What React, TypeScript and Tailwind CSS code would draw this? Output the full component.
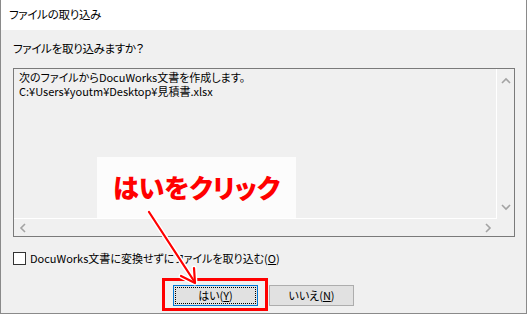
import React from 'react';

const ui = "font-['Noto_Sans_CJK_JP','Noto_Sans',sans-serif] [font-feature-settings:'palt']";

const Chevron = ({ dir }: { dir: 'up' | 'down' | 'left' | 'right' }) => {
  const paths: Record<string, string> = {
    up: 'M1 6 L5 2 L9 6',
    down: 'M1 2 L5 6 L9 2',
    left: 'M6 1 L2 5 L6 9',
    right: 'M2 1 L6 5 L2 9',
  };
  const vertical = dir === 'up' || dir === 'down';
  return (
    <svg width={vertical ? 10 : 8} height={vertical ? 8 : 10} viewBox={vertical ? '0 0 10 8' : '0 0 8 10'}>
      <path d={paths[dir]} fill="none" stroke="#a3a3a3" strokeWidth="1.6" />
    </svg>
  );
};

export default function App() {
  return (
    <div className={`relative w-[527px] h-[317px] overflow-hidden bg-white text-[11px] text-black ${ui}`}>
      {/* Window */}
      <div className="flex flex-col h-[314px] border-l border-r border-b border-[#8a8a8a]">
        {/* Title bar */}
        <div className="h-[30px] shrink-0 bg-white flex items-center pl-[8px] text-[11.5px] tracking-[-0.3px]">
          ファイルの取り込み
        </div>

        {/* Body */}
        <div className="flex-1 bg-[#f0f0f0] flex flex-col pl-[12px] pr-[11px]">
          <div className="pt-[10px] leading-[16px] text-[11.5px] tracking-[-0.3px]">ファイルを取り込みますか？</div>

          {/* Read-only text box */}
          <div className="mt-[12px] h-[169px] w-[502px] border border-[#7a7a7a] grid grid-cols-[1fr_17px] grid-rows-[1fr_17px]">
            <div className="border-r border-b border-white pl-[5px] pt-[1px] leading-[14px]">
              <div>次のファイルからDocuWorks文書を作成します。</div>
              <div>C:¥Users¥youtm¥Desktop¥見積書.xlsx</div>
            </div>
            <div className="flex flex-col items-center justify-between py-[8px]">
              <Chevron dir="up" />
              <Chevron dir="down" />
            </div>
            <div className="flex items-center justify-between px-[5px]">
              <Chevron dir="left" />
              <Chevron dir="right" />
            </div>
            <div />
          </div>

          {/* Checkbox row */}
          <div className="mt-[13px] flex items-center gap-[4px] leading-[16px]">
            <div className="w-[13px] h-[13px] border border-[#333333] bg-white" />
            <span>
              DocuWorks文書に変換せずにファイルを取り込む(<span className="underline">O</span>)
            </span>
          </div>

          {/* Buttons */}
          <div className="mt-[19px] flex gap-[11px] pl-[160px]">
            <div className="w-[85px] h-[21px] bg-[#e1e1e1] border border-[#0078d7] p-[1px]">
              <div className="h-full border border-dotted border-black flex items-center justify-center leading-none">
                はい(<span className="underline">Y</span>)
              </div>
            </div>
            <div className="w-[85px] h-[21px] bg-[#e1e1e1] border border-[#adadad] flex items-center justify-center leading-none">
              いいえ(<span className="underline">N</span>)
            </div>
          </div>
        </div>
      </div>

      {/* Annotation callout */}
      <div className="absolute left-[97px] top-[157px] w-[199px] h-[61px] bg-[#fcfcfc] flex items-center justify-center">
        <span className="text-[#ff0000] text-[26px] font-black tracking-[0px] leading-none pb-[2px]">はいをクリック</span>
      </div>

      {/* Highlight box */}
      <div className="absolute left-[162px] top-[278px] w-[106px] h-[33px] border-[3px] border-[#ff0000]" />

      {/* Arrow */}
      <svg className="absolute left-0 top-0" width="527" height="317" viewBox="0 0 527 317">
        <g stroke="#ffffff" strokeWidth="5" strokeLinecap="round" strokeLinejoin="round" fill="none">
          <line x1="149" y1="212" x2="194" y2="281" />
          <polyline points="181,276 195,283 194,268" />
        </g>
        <g stroke="#ff0000" strokeWidth="2.2" strokeLinecap="round" strokeLinejoin="round" fill="none">
          <line x1="149" y1="212" x2="194" y2="281" />
          <polyline points="181,276 195,283 194,268" />
        </g>
      </svg>
    </div>
  );
}
